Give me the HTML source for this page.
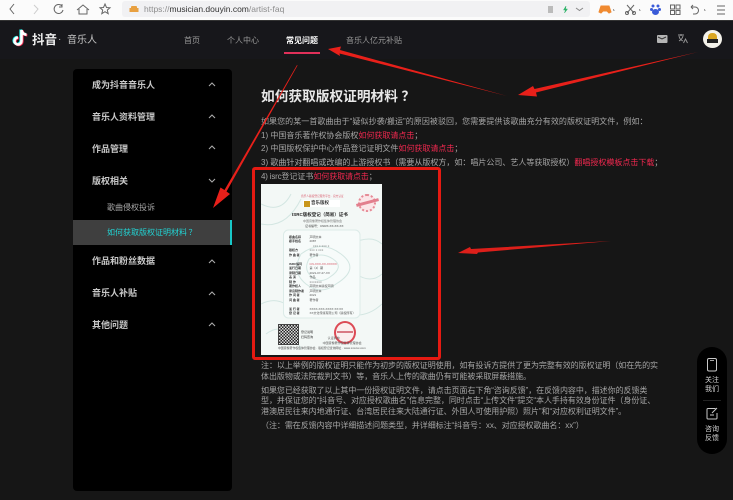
<!DOCTYPE html>
<html lang="zh"><head><meta charset="utf-8"><title>如何获取版权证明材料</title>
<style>
*{box-sizing:border-box;margin:0;padding:0}
html,body{width:733px;height:500px;overflow:hidden;background:#161616;font-family:"Liberation Sans","Noto Sans CJK SC",sans-serif}
.a{position:absolute}
.t{position:absolute;white-space:nowrap;line-height:1;filter:blur(.35px)}
.p{font-size:8px;color:#a6a6a6;left:261px}
.q{letter-spacing:-.06px}
.r{color:#f0284f}
.m{font-size:9px;font-weight:700;color:#c8c8c8;left:92px}
.n{font-size:8px;color:#999}
.c{position:absolute;white-space:nowrap;line-height:1;color:#333;font-size:3px}
</style></head><body>
<div class="a" style="left:0;top:0;width:733px;height:20px;background:#fbfbfb"></div>
<div class="a" style="left:122px;top:1px;width:468px;height:16px;background:#f1f1f3;border-radius:3px"></div>
<svg class="a" style="left:0;top:0" width="733" height="20" fill="none" stroke="#666" stroke-width="1">
<path d="M14 4l-4 5 4 5"/><path d="M34 5l4 4-4 5" stroke="#ccc"/>
<path d="M62 6a4.500 4.500 0 1 0 1 4M62 4v3h-3"/>
<path d="M77 10l6-5 6 5M79 9v5h8V9"/>
<path d="M105 4l1.500 3.500 3.500.3-2.700 2.300.9 3.600-3.200-2-3.200 2 .9-3.600-2.700-2.300 3.500-.3z"/>
<rect x="131" y="6" width="6" height="5" rx="1" fill="#e8a040" stroke="none"/><rect x="129.500" y="8" width="9" height="4" fill="#e8a040" stroke="none"/>
<rect x="548" y="6" width="5" height="7" fill="#bbb" stroke="none"/>
<path d="M566 6l-2.500 4h2l-1 3 3-4h-2z" fill="#2fb36a" stroke="#2fb36a" stroke-width=".5"/>
<path d="M576 8l3.500 2.500 3.500-2.500" stroke="#888"/>
<path d="M601 6h8l2 6-2 1-2-2h-4l-2 2-2-1z" fill="#f08a30" stroke="#f08a30"/>
<path d="M613 9l2 1.500-2 0z" fill="#666" stroke="none"/>
<path d="M627 5l7 8M634 5l-7 8"/><circle cx="627" cy="13" r="1.500"/><circle cx="634" cy="13" r="1.500"/>
<path d="M639 9l2 1.500-2 0z" fill="#666" stroke="none"/>
<g fill="#3a5bd8" stroke="none"><circle cx="653" cy="6" r="1.500"/><circle cx="658" cy="6" r="1.500"/><circle cx="651.500" cy="9.500" r="1.500"/><circle cx="659.500" cy="9.500" r="1.500"/><ellipse cx="655.500" cy="12" rx="3.500" ry="3"/></g>
<rect x="670.500" y="5" width="4" height="4"/><rect x="676" y="5" width="4" height="4"/><rect x="670.500" y="10.500" width="4" height="4"/><rect x="676" y="10.500" width="4" height="4"/>
<path d="M691 7h4a3.500 3.500 0 0 1 0 7h-2M691 7l2-2M691 7l2 2"/>
<path d="M704 9l2 1.500-2 0z" fill="#666" stroke="none"/>
<path d="M717 6h8M717 10h8M717 14h8"/>
</svg>
<div class="t" style="left:144px;top:5px;font-size:8.500px;color:#8d8d8d;filter:blur(.3px)">https://<b style="color:#333;font-weight:400">musician.douyin.com</b>/artist-faq</div>
<div class="a" style="left:0;top:20px;width:733px;height:1px;background:#333"></div>
<div class="a" style="left:0;top:21px;width:733px;height:38px;background:#17171b"></div>
<svg class="a" style="left:11px;top:28px" width="20" height="20" viewBox="0 0 20 20" fill="none">
<path d="M10.500 2v11a3.500 3.500 0 1 1-3.500-3.500M10.500 2c.5 3 2.500 4.500 5 4.700" stroke="#25f4ee" stroke-width="2.600" transform="translate(-.8 -.5)"/>
<path d="M10.500 2v11a3.500 3.500 0 1 1-3.500-3.500M10.500 2c.5 3 2.500 4.500 5 4.700" stroke="#fe2c55" stroke-width="2.600" transform="translate(.8 .5)"/>
<path d="M10.500 2v11a3.500 3.500 0 1 1-3.500-3.500M10.500 2c.5 3 2.500 4.500 5 4.700" stroke="#fff" stroke-width="2.600"/></svg>
<div class="t" style="left:32px;top:34px;font-size:12.500px;font-weight:700;color:#eee">抖音</div>
<div class="t" style="left:58px;top:35px;font-size:10px;color:#bbb">·</div>
<div class="t" style="left:67px;top:36px;font-size:10px;color:#c4c4c4">音乐人</div>
<div class="t n" style="left:184px;top:37px">首页</div>
<div class="t n" style="left:227px;top:37px">个人中心</div>
<div class="t" style="left:286px;top:37px;font-size:8px;font-weight:700;color:#fff">常见问题</div>
<div class="a" style="left:284px;top:52px;width:36px;height:1.500px;background:#e0305a"></div>
<div class="t n" style="left:346px;top:37px">音乐人亿元补贴</div>
<svg class="a" style="left:657px;top:33px" width="35" height="14" fill="none">
<rect x="0" y="2" width="10.500" height="8" rx="1" fill="#b5b5b5"/><path d="M1 4l4 2 4-2" stroke="#333"/>
<path d="M21 2h6M24 1v2M22 3c.5 3 2 4 4 5M26 3c-.5 2-2 4-4 5M26.500 10l2-4 2 4" stroke="#999" stroke-width=".9"/></svg>
<div class="a" style="left:703px;top:30px;width:19px;height:18px;border-radius:50%;background:#f4f2ea;overflow:hidden">
<div class="a" style="left:5px;top:3px;width:9px;height:7px;background:#d9a520;border-radius:4px 4px 0 0"></div>
<div class="a" style="left:4px;top:9px;width:11px;height:4px;background:#222"></div></div>

<div class="a" style="left:73px;top:69px;width:159px;height:422px;background:#000;border-radius:4px"></div>
<div class="a" style="left:73px;top:220px;width:159px;height:25px;background:#3f3f3f;border-right:2px solid #18c7c7"></div>
<div class="t m" style="top:81px">成为抖音音乐人</div>
<div class="t m" style="top:113px">音乐人资料管理</div>
<div class="t m" style="top:145px">作品管理</div>
<div class="t m" style="top:177px">版权相关</div>
<div class="t" style="left:107px;top:204px;font-size:8px;color:#a8a8a8">歌曲侵权投诉</div>
<div class="t" style="left:107px;top:229px;font-size:8px;color:#22d4d4">如何获取版权证明材料<span style="margin-left:1.500px">？</span></div>
<div class="t m" style="top:257px">作品和粉丝数据</div>
<div class="t m" style="top:289px">音乐人补贴</div>
<div class="t m" style="top:321px">其他问题</div>
<svg class="a" style="left:205px;top:70px" width="15" height="270" fill="none" stroke="#aaa" stroke-width="1.100">
<path d="M4 16l3-3 3 3M4 48l3-3 3 3M4 79l3-3 3 3M4 109l3 3 3-3M4 193l3-3 3 3M4 225l3-3 3 3M4 256l3-3 3 3"/></svg>

<div class="t" style="left:261px;top:90px;font-size:13.700px;font-weight:700;color:#e8e8e8">如何获取版权证明材料<span style="margin-left:3.500px">？</span></div>
<div class="t p" style="top:118px;letter-spacing:.06px">如果您的某一首歌曲由于“疑似抄袭/搬运”的原因被驳回，您需要提供该歌曲充分有效的版权证明文件，例如：</div>
<div class="t p" style="top:132px">1) 中国音乐著作权协会版权<span class="r">如何获取请点击</span>；</div>
<div class="t p" style="top:145px">2) 中国版权保护中心作品登记证明文件<span class="r">如何获取请点击</span>；</div>
<div class="t p" style="top:159px">3) 歌曲针对翻唱或改编的上游授权书（需要从版权方，如：唱片公司、艺人等获取授权）<span class="r">翻唱授权模板点击下载</span>；</div>
<div class="t p" style="top:173px"><span style="letter-spacing:-.2px">4) isrc</span>登记证书<span class="r" style="letter-spacing:-.1px">如何获取请点击</span>；</div>

<div class="a" style="left:261px;top:184px;width:121px;height:171px;background:#f3f8f6;overflow:hidden;filter:blur(.35px)">
<svg class="a" style="left:0;top:0" width="121" height="171" fill="none" stroke="#d3e6e2" stroke-width="1">
<path d="M0 20q20 10 30-10M0 40q25 5 40-25M90 60q20-10 31 0M95 90q15 10 26 0M0 120q20-10 35 10M85 130q20 5 36-10M5 150q20-15 35 15"/>
<rect x="22.500" y="46" width="76.500" height="88" rx="5" fill="#f7fbfa" stroke="#dcebe8"/>
<path d="M40 70q20-15 40 0t-5 30q-15 12-30 0t-5-30zM48 75q12-8 24 0t-3 18q-9 7-18 0t-3-18z"/></svg>
<div class="c" style="left:40px;top:12px;color:#d9586a;font-size:2.700px">音乐人版权登记服务平台 · 官方认证</div>
<div class="a" style="left:42px;top:16px;width:37px;height:7px;background:#fff"></div>
<div class="a" style="left:43px;top:16.500px;width:6px;height:6px;background:#c9961c"></div>
<div class="c" style="left:50px;top:17px;font-size:4.500px;font-weight:700;color:#333">音乐版权</div>
<div class="a" style="left:97px;top:10px;width:18px;height:18px;border-radius:50%;border:2px dotted #e58a95;background:#fbe6e8"></div>
<div class="a" style="left:95px;top:17px;width:23px;height:3px;background:#e27f8d;transform:rotate(-15deg)"></div>
<div class="c" style="left:31px;top:29px;font-size:4.500px;font-weight:700;color:#222">ISRC版权登记（简易）证书</div>
<div class="c" style="left:42px;top:36px;color:#777">中国音像著作权集体管理协会</div>
<div class="c" style="left:44px;top:41px;color:#444">证书编号：CNRX-XX-XX-XX</div>
<div class="c" style="left:28px;top:51px;line-height:4.470px;font-weight:700;white-space:pre">歌曲名称
歌手姓名

版权方
作 曲 者

ISRC编码
发行日期
录制日期
表 演
制 作
著作权人
录音制作者
作 词 者
词 曲 者

发 行 者
登 记 者</div>
<div class="c" style="left:48.500px;top:51px;line-height:4.470px;color:#555;white-space:pre">声明文本
2087
    ××× × ××× ×
××× × ×××
著作者

<span style="color:#d4505f">CN-XXX-XX-XXXXX</span>
第（4）期
2021-07-27-XX
作品
×××××××
声明文本版权声明
声明文本
2021
著作者

XXXX-XXX-XXXX XX:XX
XX文化传媒有限公司（版权所有）</div>
<div class="a" style="left:17px;top:140px;width:21px;height:21px;background:repeating-conic-gradient(#222 0 25%,#ddd 0 50%) 0 0/3px 3px;border:1px solid #444"></div>
<div class="c" style="left:40px;top:146px;line-height:4.500px;white-space:pre">登记说明
扫码查询</div>
<div class="a" style="left:73px;top:137px;width:22px;height:23px;border-radius:50%;border:2px solid #dc4a55;background:#fbeeee"></div>
<div class="a" style="left:76px;top:147px;width:16px;height:2px;background:#d97a84"></div>
<div class="c" style="left:60px;top:152px;line-height:4.500px;color:#555;white-space:pre">        认证机构
  中国音像著作权集体管理协会</div>
<div class="c" style="left:17px;top:163px;font-size:2.900px;color:#555">中国音像著作权集体管理协会 · 版权登记查询网址 · www.xxxxxx.com</div>
</div>

<div class="t p q" style="top:362px">注：以上举例的版权证明只能作为初步的版权证明使用，如有投诉方提供了更为完整有效的版权证明（如在先的实</div>
<div class="t p q" style="top:373px">体出版物或法院裁判文书）等，音乐人上传的歌曲仍有可能被采取屏蔽措施。</div>
<div class="t p q" style="top:387px">如果您已经获取了以上其中一份授权证明文件，请点击页面右下角“咨询反馈”，在反馈内容中，描述你的反馈类</div>
<div class="t p q" style="top:397px">型，并保证您的“抖音号、对应授权歌曲名”信息完整，同时点击“上传文件”提交“本人手持有效身份证件（身份证、</div>
<div class="t p q" style="top:408px">港澳居民往来内地通行证、台湾居民往来大陆通行证、外国人可使用护照）照片”和“对应权利证明文件”。</div>
<div class="t p q" style="top:422px">（注：需在反馈内容中详细描述问题类型，并详细标注“抖音号：xx、对应授权歌曲名：xx”）</div>

<div class="a" style="left:697px;top:347px;width:30px;height:107px;background:#000;border-radius:15px"></div>
<svg class="a" style="left:697px;top:348px" width="30" height="106" fill="none" stroke="#c8c8c8" stroke-width="1">
<rect x="10.500" y="10.500" width="9" height="12.500" rx="1.500"/><path d="M13 12.500h4" stroke-width=".8"/>
<path d="M18.500 60.500h-7.500a1 1 0 0 0-1 1V70a1 1 0 0 0 1 1h8a1 1 0 0 0 1-1v-5M13 67h4M15 65l5-5"/></svg>
<div class="a" style="left:703px;top:400px;width:18px;height:1px;background:#222"></div>
<div class="t" style="left:705px;top:376px;font-size:7px;line-height:9px;color:#d4d4d4;white-space:pre">关注
我们</div>
<div class="t" style="left:705px;top:425px;font-size:7px;line-height:9px;color:#d4d4d4;white-space:pre">咨询
反馈</div>

<svg class="a" style="left:0;top:0" width="733" height="500" fill="none">
<rect x="253.500" y="168.500" width="186" height="190" rx="1.500" stroke="#e51a12" stroke-width="3"/>
<g fill="#e8201a">
<path d="M297 65L224.500 190 220.500 187.500 213 208 230 194 226.500 191.500 297.500 65.500z"/>
<path d="M328 49L341 46.500 340 50 507 96 339.500 53.500 340 56z"/>
<path d="M698 52L536 92.500 537 96.500 518 95 533 86 534.500 89z"/>
<path d="M611 241L478 252.500 477 254 458 253 470 247 471 249z" opacity=".95"/>
</g></svg>
</body></html>
